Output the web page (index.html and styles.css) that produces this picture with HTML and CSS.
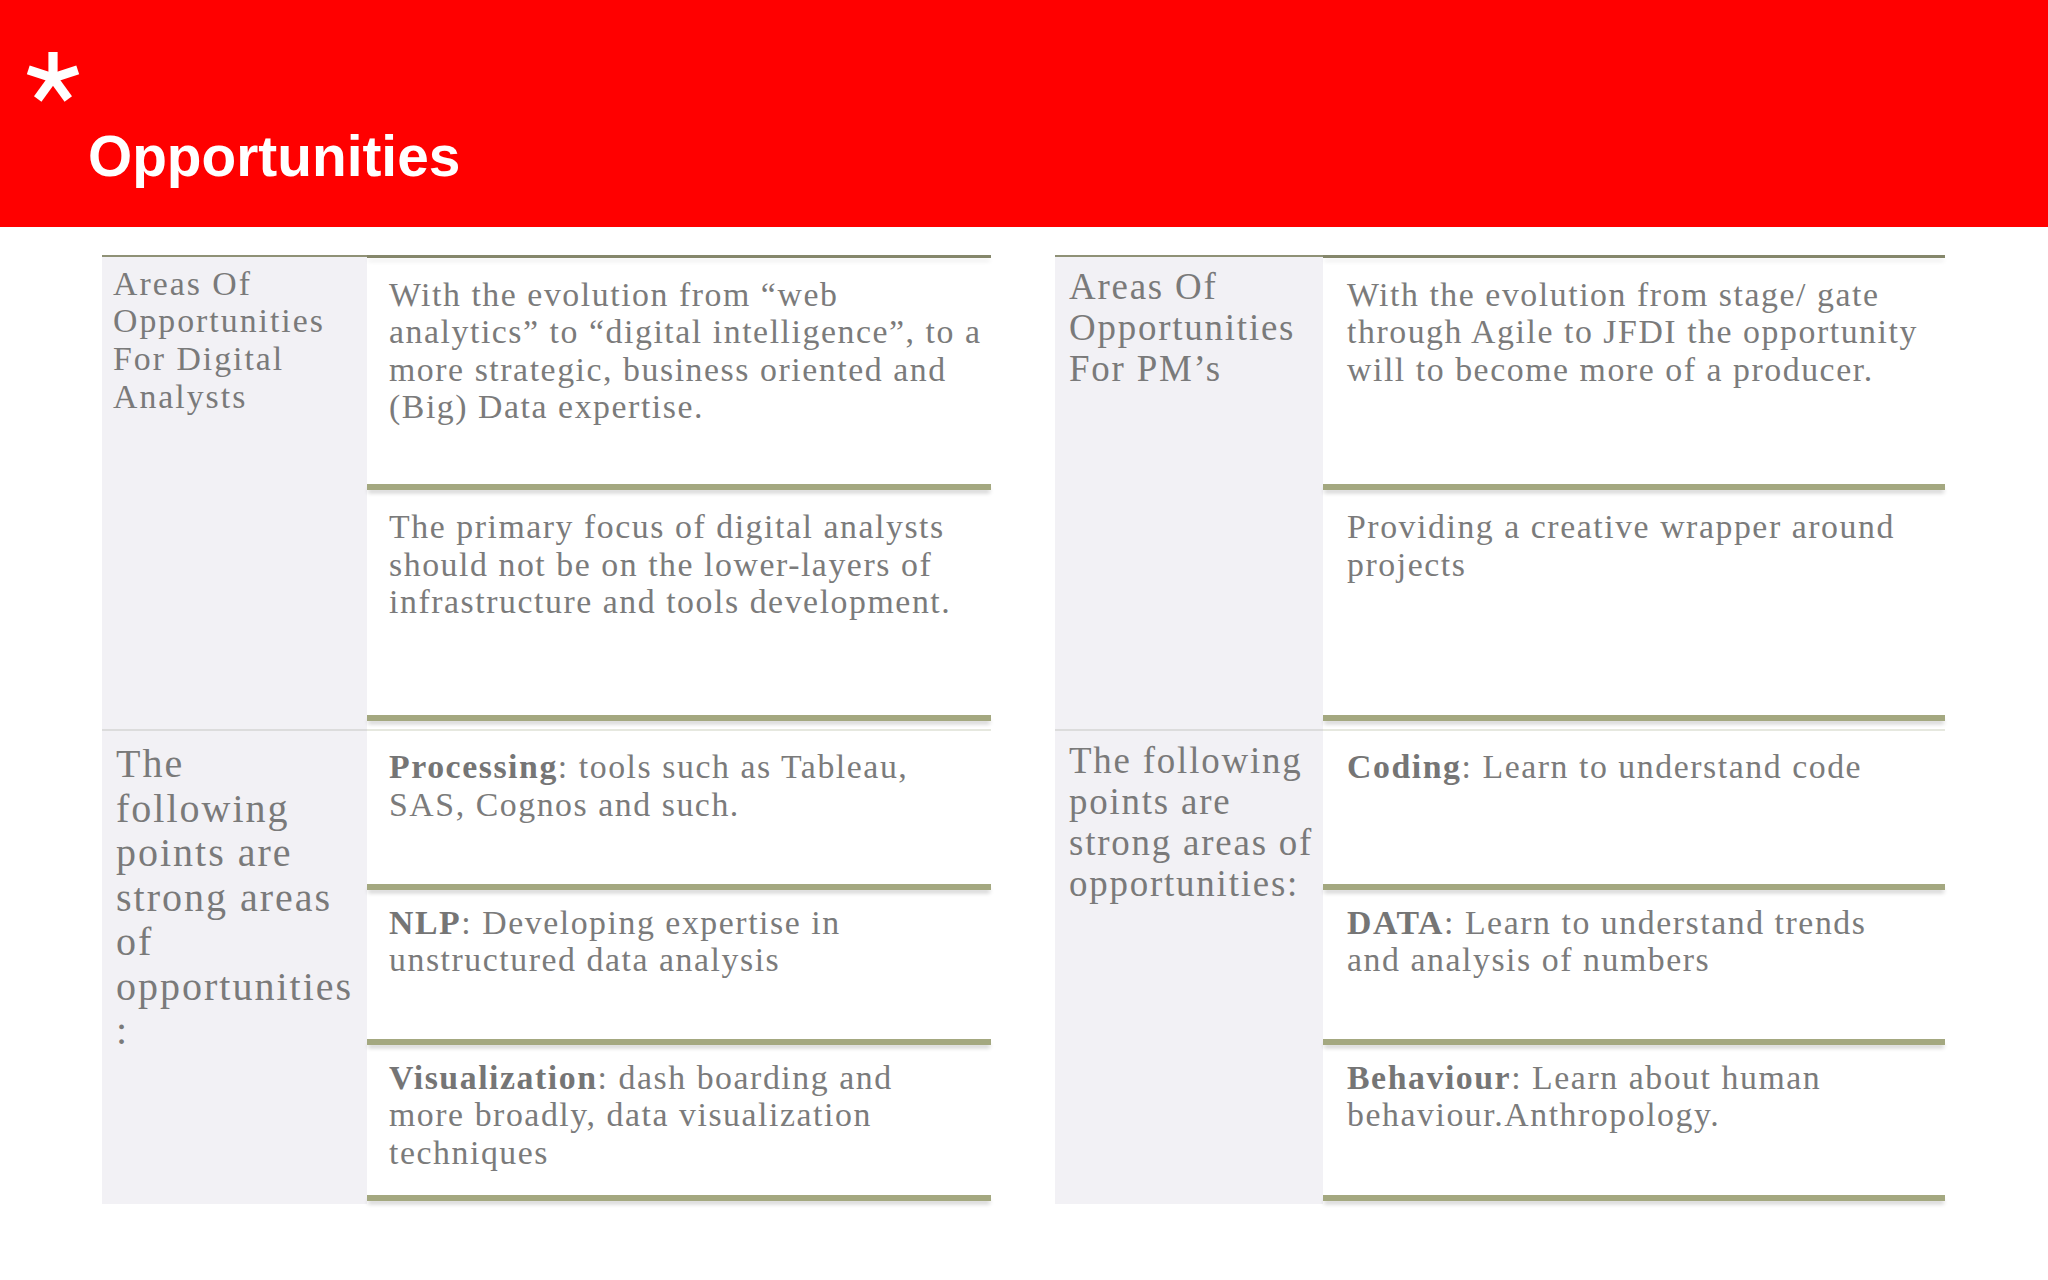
FILE: index.html
```html
<!DOCTYPE html>
<html lang="en">
<head>
<meta charset="utf-8">
<title>Opportunities</title>
<link rel="stylesheet" href="styles.css">
</head>
<body>
<header class="banner">
  <svg class="star" viewBox="-28 -26 56 52" aria-hidden="true">
    <g fill="#ffffff">
      <rect x="-4.6" y="-26" width="9.2" height="29"/>
      <rect x="-4.6" y="-26" width="9.2" height="29" transform="rotate(72)"/>
      <rect x="-4.6" y="-26" width="9.2" height="29" transform="rotate(144)"/>
      <rect x="-4.6" y="-26" width="9.2" height="29" transform="rotate(216)"/>
      <rect x="-4.6" y="-26" width="9.2" height="29" transform="rotate(288)"/>
    </g>
  </svg>
  <h1 class="title">Opportunities</h1>
</header>

<main class="content">
  <section class="panel panel-left">
    <div class="block block-top">
      <div class="label label-a">Areas Of<br>Opportunities<br>For Digital<br>Analysts</div>
      <div class="items">
        <div class="rule rule-top"></div>
        <div class="item item-1">With the evolution from “web<br>analytics” to “digital intelligence”, to a<br>more strategic, business oriented and<br>(Big) Data expertise.</div>
        <div class="rule"></div>
        <div class="item item-2">The primary focus of digital analysts<br>should not be on the lower-layers of<br>infrastructure and tools development.</div>
        <div class="rule"></div>
      </div>
    </div>
    <div class="block block-bottom">
      <div class="label label-b">The<br>following<br>points are<br>strong areas<br>of<br>opportunities<br>:</div>
      <div class="items">
        <div class="rule rule-light"></div>
        <div class="item item-3"><strong>Processing</strong>: tools such as Tableau,<br>SAS, Cognos and such.</div>
        <div class="rule"></div>
        <div class="item item-4"><strong>NLP</strong>: Developing expertise in<br>unstructured data analysis</div>
        <div class="rule"></div>
        <div class="item item-5"><strong>Visualization</strong>: dash boarding and<br>more broadly, data visualization<br>techniques</div>
        <div class="rule"></div>
      </div>
    </div>
  </section>

  <section class="panel panel-right">
    <div class="block block-top">
      <div class="label label-c">Areas Of<br>Opportunities<br>For PM’s</div>
      <div class="items">
        <div class="rule rule-top"></div>
        <div class="item item-1">With the evolution from stage/ gate<br>through Agile to JFDI the opportunity<br>will to become more of a producer.</div>
        <div class="rule"></div>
        <div class="item item-2">Providing a creative wrapper around<br>projects</div>
        <div class="rule"></div>
      </div>
    </div>
    <div class="block block-bottom">
      <div class="label label-d">The following<br>points are<br>strong areas of<br>opportunities:</div>
      <div class="items">
        <div class="rule rule-light"></div>
        <div class="item item-3"><strong>Coding</strong>: Learn to understand code</div>
        <div class="rule"></div>
        <div class="item item-4"><strong>DATA</strong>: Learn to understand trends<br>and analysis of numbers</div>
        <div class="rule"></div>
        <div class="item item-5"><strong>Behaviour</strong>: Learn about human<br>behaviour.Anthropology.</div>
        <div class="rule"></div>
      </div>
    </div>
  </section>
</main>
</body>
</html>
```

FILE: styles.css
```css
* { box-sizing: border-box; }

html, body {
  margin: 0;
  padding: 0;
}

body {
  width: 2048px;
  height: 1280px;
  overflow: hidden;
  background: #ffffff;
  font-family: "Liberation Serif", "DejaVu Serif", serif;
  color: #7b7b7b;
}

/* ---------- banner ---------- */
.banner {
  height: 227px;
  background: #ff0000;
  padding: 52px 0 0 25px;
  display: flex;
  flex-direction: column;
}

.star {
  display: block;
  width: 56px;
  height: 52px;
}

.title {
  margin: 24px 0 0 63px;
  font-family: "Liberation Sans", Arial, sans-serif;
  font-weight: 700;
  font-size: 56.8px;
  line-height: 57px;
  color: #ffffff;
}

/* ---------- content ---------- */
.content {
  display: flex;
  gap: 64px;
  padding: 28px 0 0 102px;
}

.panel {
  display: flex;
  flex-direction: column;
}

.panel-left { width: 889px; --label-w: 265px; --item-pad: 22px; }
.panel-right { width: 890px; --label-w: 268px; --item-pad: 24px; }

.block { display: flex; }
.block-top { height: 474px; }
.block-bottom { height: 475px; }

.label {
  flex: none;
  width: var(--label-w);
  background: #f2f1f5;
  white-space: nowrap;
  color: #7a7a7a;
}

.block-top .label { border-top: 2px solid #8f9176; }
.block-bottom .label { border-top: 2px solid #dcdcdc; }

.label-a { font-size: 33.8px; line-height: 37.7px; letter-spacing: 2px; padding: 7.7px 0 0 11px; }
.label-b { font-size: 40px; line-height: 44.5px; letter-spacing: 2px; padding: 11px 0 0 14px; }
.label-c { font-size: 36.9px; line-height: 41px; letter-spacing: 1.8px; padding: 8.5px 0 0 14px; }
.label-d { font-size: 36.9px; line-height: 41px; letter-spacing: 1.8px; padding: 8.8px 0 0 14px; }

.items {
  flex: 1;
  display: flex;
  flex-direction: column;
}

.rule {
  flex: none;
  height: 6px;
  background: #a4a880;
  box-shadow: 0 4px 4px -1px rgba(0, 0, 0, 0.2);
}

.rule-top {
  height: 3px;
  background: #85876b;
}

.rule-light {
  height: 2px;
  background: #e6e8df;
  box-shadow: 0 3px 4px -1px rgba(0, 0, 0, 0.08);
}

.item {
  flex: none;
  padding: 13.8px 0 0 var(--item-pad);
  font-size: 33.8px;
  line-height: 37.5px;
  letter-spacing: 1.55px;
  white-space: nowrap;
  color: #7b7b7b;
}

.item strong {
  font-weight: 700;
  color: #757575;
}

.item-1 { height: 226px; padding-top: 17.6px; }
.item-2 { height: 225px; padding-top: 18px; }
.item-3 { height: 153px; padding-top: 17px; }
.item-4 { height: 149px; }
.item-5 { height: 150px; }
```
